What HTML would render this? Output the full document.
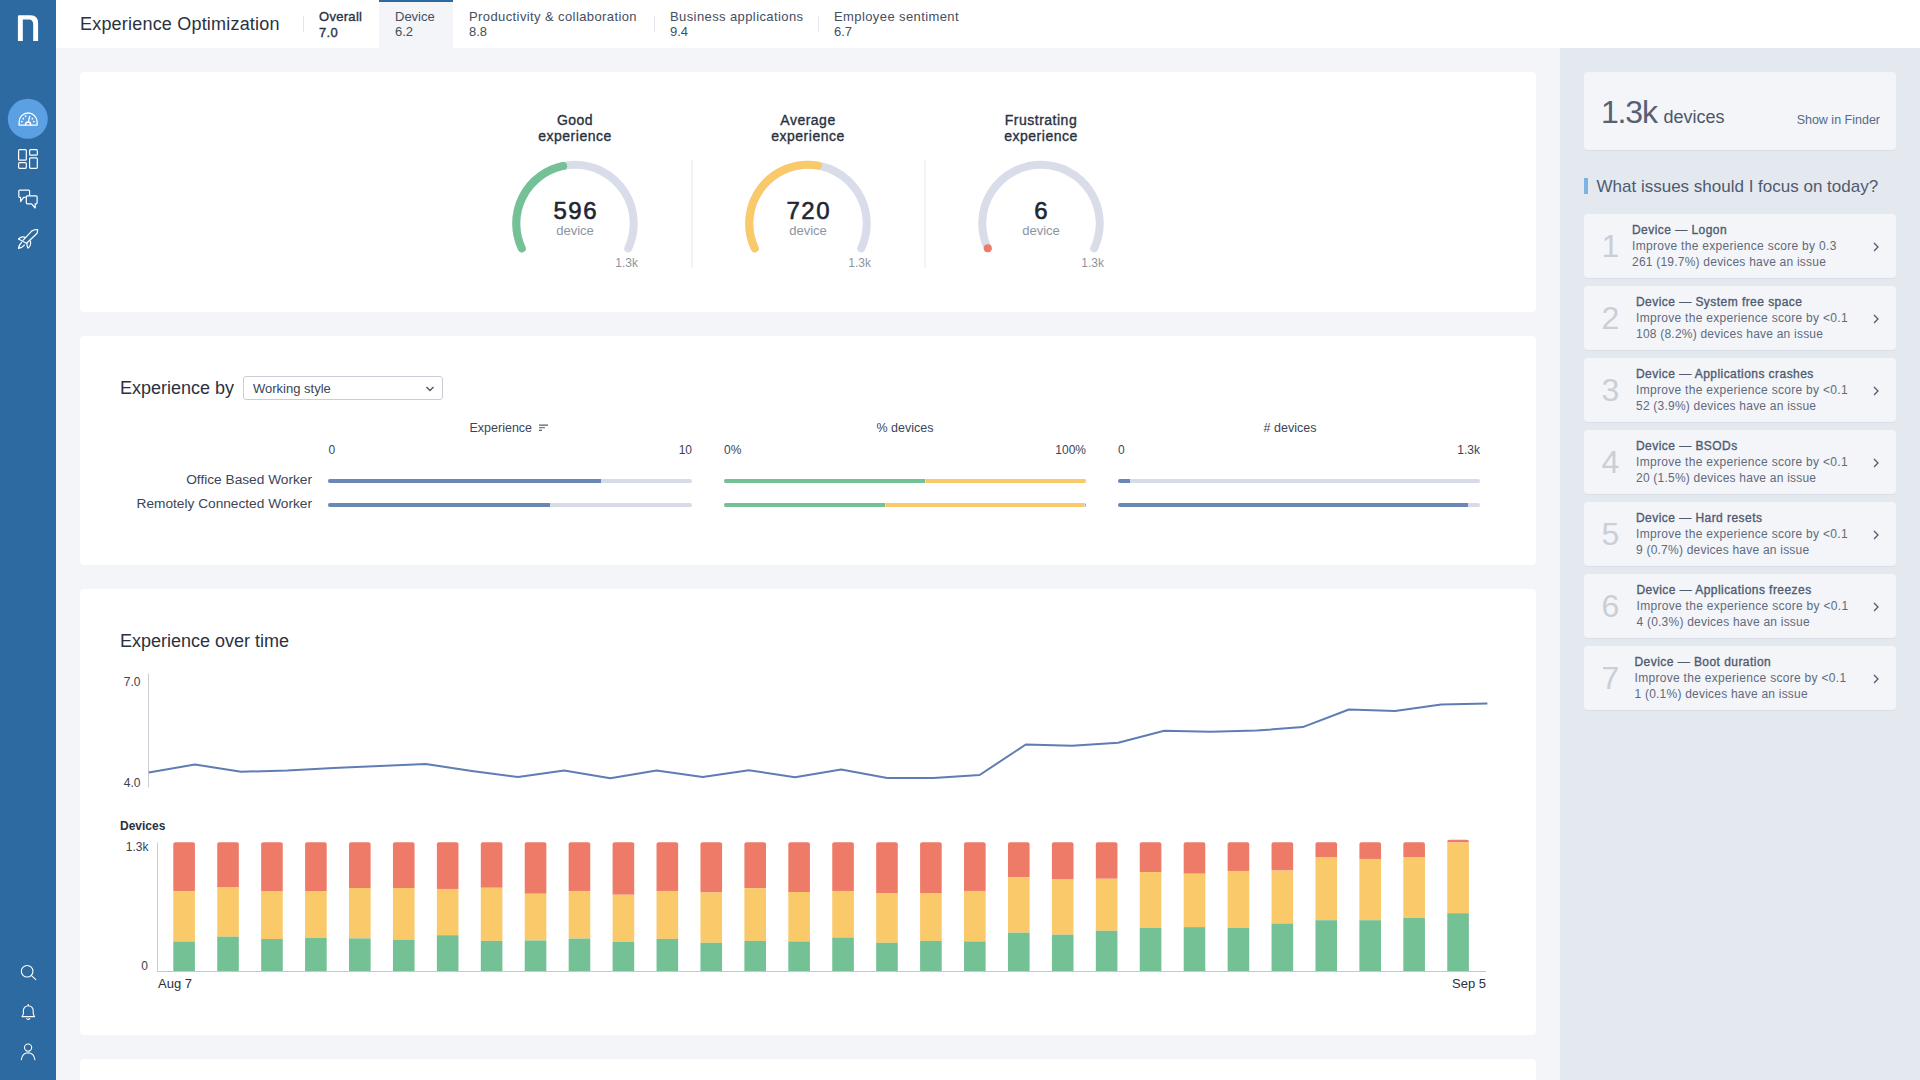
<!DOCTYPE html>
<html><head><meta charset="utf-8"><title>Experience Optimization</title>
<style>
*{margin:0;padding:0;box-sizing:border-box}
html,body{width:1920px;height:1080px;overflow:hidden;background:#F3F5F8;font-family:"Liberation Sans",sans-serif}
.t{position:absolute;white-space:nowrap}
.abs{position:absolute}
</style></head><body>
<div class="abs" style="left:0;top:0;width:56px;height:1080px;background:#2D6AA1"></div>
<div class="abs" style="left:56px;top:0;width:1864px;height:48px;background:#FFFFFF"></div>
<div class="abs" style="left:1560px;top:48px;width:360px;height:1032px;background:#E4E8EF"></div>
<div class="abs" style="left:80px;top:72px;width:1456px;height:240px;background:#FFFFFF;border-radius:4px"></div>
<div class="abs" style="left:80px;top:336px;width:1456px;height:229px;background:#FFFFFF;border-radius:4px"></div>
<div class="abs" style="left:80px;top:589px;width:1456px;height:446px;background:#FFFFFF;border-radius:4px"></div>
<div class="abs" style="left:80px;top:1059px;width:1456px;height:141px;background:#FFFFFF;border-radius:4px"></div>
<div class="t" style="left:80px;top:14.76px;font-size:18px;line-height:18px;color:#2A3140;font-weight:400;letter-spacing:0.2px;">Experience Optimization</div>
<div class="abs" style="left:303px;top:16px;width:1px;height:16px;background:#E3E6EC"></div>
<div class="abs" style="left:379px;top:0;width:74px;height:48px;background:#F3F5F8"></div>
<div class="abs" style="left:379px;top:0;width:74px;height:2px;background:#2D6AA1"></div>
<div class="t" style="left:319px;top:10.00px;font-size:13px;line-height:13px;color:#2A3140;font-weight:400;letter-spacing:0.3px;-webkit-text-stroke:0.35px #2A3140;">Overall</div>
<div class="t" style="left:319px;top:25.50px;font-size:13px;line-height:13px;color:#2A3140;font-weight:400;letter-spacing:0.3px;-webkit-text-stroke:0.35px #2A3140;">7.0</div>
<div class="t" style="left:395px;top:10.00px;font-size:13px;line-height:13px;color:#444E5F;font-weight:400;">Device</div>
<div class="t" style="left:395px;top:25.20px;font-size:13px;line-height:13px;color:#444E5F;font-weight:400;">6.2</div>
<div class="t" style="left:469px;top:10.00px;font-size:13px;line-height:13px;color:#444E5F;font-weight:400;letter-spacing:0.4px;">Productivity &amp; collaboration</div>
<div class="t" style="left:469px;top:25.20px;font-size:13px;line-height:13px;color:#444E5F;font-weight:400;">8.8</div>
<div class="t" style="left:670px;top:10.00px;font-size:13px;line-height:13px;color:#444E5F;font-weight:400;letter-spacing:0.4px;">Business applications</div>
<div class="t" style="left:670px;top:25.20px;font-size:13px;line-height:13px;color:#444E5F;font-weight:400;">9.4</div>
<div class="t" style="left:834px;top:10.00px;font-size:13px;line-height:13px;color:#444E5F;font-weight:400;letter-spacing:0.4px;">Employee sentiment</div>
<div class="t" style="left:834px;top:25.20px;font-size:13px;line-height:13px;color:#444E5F;font-weight:400;">6.7</div>
<div class="abs" style="left:654px;top:16px;width:1px;height:16px;background:#E3E6EC"></div>
<div class="abs" style="left:818px;top:16px;width:1px;height:16px;background:#E3E6EC"></div>
<svg class="abs" style="left:0;top:0" width="1920" height="1080" viewBox="0 0 1920 1080"><path d="M521.75,248.33 A58.75,58.75 0 1 1 628.25,248.33" fill="none" stroke="#D9DDEA" stroke-width="8" stroke-linecap="round"/><path d="M521.75,248.33 A58.75,58.75 0 0 1 563.17,165.95" fill="none" stroke="#74C196" stroke-width="8" stroke-linecap="round"/><path d="M754.75,248.33 A58.75,58.75 0 1 1 861.25,248.33" fill="none" stroke="#D9DDEA" stroke-width="8" stroke-linecap="round"/><path d="M754.75,248.33 A58.75,58.75 0 0 1 818.09,165.62" fill="none" stroke="#F9C96A" stroke-width="8" stroke-linecap="round"/><path d="M987.75,248.33 A58.75,58.75 0 1 1 1094.25,248.33" fill="none" stroke="#D9DDEA" stroke-width="8" stroke-linecap="round"/><circle cx="987.75" cy="248.33" r="4.0" fill="#EE7A68"/><rect x="691.5" y="160" width="1" height="108" fill="#E6E8EE"/><rect x="924.5" y="160" width="1" height="108" fill="#E6E8EE"/></svg>
<div class="t" style="left:75px;width:1000px;text-align:center;top:113.15px;font-size:14px;line-height:14px;color:#2A3140;font-weight:400;letter-spacing:0.5px;-webkit-text-stroke:0.35px #2A3140;">Good</div>
<div class="t" style="left:75px;width:1000px;text-align:center;top:129.15px;font-size:14px;line-height:14px;color:#2A3140;font-weight:400;letter-spacing:0.5px;-webkit-text-stroke:0.35px #2A3140;">experience</div>
<div class="t" style="left:75.79999999999995px;width:1000px;text-align:center;top:198.98px;font-size:24px;line-height:24px;color:#1F2633;font-weight:400;letter-spacing:1.6px;-webkit-text-stroke:0.6px #1F2633;">596</div>
<div class="t" style="left:75px;width:1000px;text-align:center;top:224.00px;font-size:13px;line-height:13px;color:#8C94A3;font-weight:400;">device</div>
<div class="t" style="right:1282px;top:256.84px;font-size:12px;line-height:12px;color:#8C94A3;font-weight:400;">1.3k</div>
<div class="t" style="left:308px;width:1000px;text-align:center;top:113.15px;font-size:14px;line-height:14px;color:#2A3140;font-weight:400;letter-spacing:0.5px;-webkit-text-stroke:0.35px #2A3140;">Average</div>
<div class="t" style="left:308px;width:1000px;text-align:center;top:129.15px;font-size:14px;line-height:14px;color:#2A3140;font-weight:400;letter-spacing:0.5px;-webkit-text-stroke:0.35px #2A3140;">experience</div>
<div class="t" style="left:308.79999999999995px;width:1000px;text-align:center;top:198.98px;font-size:24px;line-height:24px;color:#1F2633;font-weight:400;letter-spacing:1.6px;-webkit-text-stroke:0.6px #1F2633;">720</div>
<div class="t" style="left:308px;width:1000px;text-align:center;top:224.00px;font-size:13px;line-height:13px;color:#8C94A3;font-weight:400;">device</div>
<div class="t" style="right:1049px;top:256.84px;font-size:12px;line-height:12px;color:#8C94A3;font-weight:400;">1.3k</div>
<div class="t" style="left:541px;width:1000px;text-align:center;top:113.15px;font-size:14px;line-height:14px;color:#2A3140;font-weight:400;letter-spacing:0.5px;-webkit-text-stroke:0.35px #2A3140;">Frustrating</div>
<div class="t" style="left:541px;width:1000px;text-align:center;top:129.15px;font-size:14px;line-height:14px;color:#2A3140;font-weight:400;letter-spacing:0.5px;-webkit-text-stroke:0.35px #2A3140;">experience</div>
<div class="t" style="left:541.8px;width:1000px;text-align:center;top:198.98px;font-size:24px;line-height:24px;color:#1F2633;font-weight:400;letter-spacing:1.6px;-webkit-text-stroke:0.6px #1F2633;">6</div>
<div class="t" style="left:541px;width:1000px;text-align:center;top:224.00px;font-size:13px;line-height:13px;color:#8C94A3;font-weight:400;">device</div>
<div class="t" style="right:816px;top:256.84px;font-size:12px;line-height:12px;color:#8C94A3;font-weight:400;">1.3k</div>
<div class="t" style="left:120px;top:378.76px;font-size:18px;line-height:18px;color:#2A3140;font-weight:400;">Experience by</div>
<div class="abs" style="left:243px;top:376px;width:200px;height:24px;border:1px solid #C9CDD6;border-radius:3px;background:#fff"></div>
<div class="t" style="left:253px;top:382.00px;font-size:13px;line-height:13px;color:#3B4557;font-weight:400;">Working style</div>
<svg class="abs" style="left:425px;top:385px" width="10" height="8" viewBox="0 0 10 8"><path d="M1.5,2 L5,5.5 L8.5,2" fill="none" stroke="#4A5365" stroke-width="1.3"/></svg>
<div class="t" style="left:469.5px;top:422.42px;font-size:12.5px;line-height:12.5px;color:#3B4557;font-weight:400;">Experience</div>
<svg class="abs" style="left:538px;top:423.3px" width="12" height="10" viewBox="0 0 12 10"><rect x="1" y="1.6" width="9" height="1" fill="#2F3645"/><rect x="1" y="4.2" width="6" height="1" fill="#5A6070"/><rect x="1" y="6.7" width="3" height="1" fill="#2F3645"/></svg>
<div class="t" style="left:405px;width:1000px;text-align:center;top:422.42px;font-size:12.5px;line-height:12.5px;color:#3B4557;font-weight:400;">% devices</div>
<div class="t" style="left:790px;width:1000px;text-align:center;top:422.42px;font-size:12.5px;line-height:12.5px;color:#3B4557;font-weight:400;"># devices</div>
<div class="t" style="left:328.5px;top:443.84px;font-size:12px;line-height:12px;color:#3B4557;font-weight:400;">0</div>
<div class="t" style="right:1228px;top:443.84px;font-size:12px;line-height:12px;color:#3B4557;font-weight:400;">10</div>
<div class="t" style="left:724px;top:443.84px;font-size:12px;line-height:12px;color:#3B4557;font-weight:400;">0%</div>
<div class="t" style="right:834px;top:443.84px;font-size:12px;line-height:12px;color:#3B4557;font-weight:400;">100%</div>
<div class="t" style="left:1118px;top:443.84px;font-size:12px;line-height:12px;color:#3B4557;font-weight:400;">0</div>
<div class="t" style="right:440px;top:443.84px;font-size:12px;line-height:12px;color:#3B4557;font-weight:400;">1.3k</div>
<div class="t" style="right:1608px;top:473.40px;font-size:13.7px;line-height:13.7px;color:#3B4557;font-weight:400;">Office Based Worker</div>
<div class="t" style="right:1608px;top:497.40px;font-size:13.7px;line-height:13.7px;color:#3B4557;font-weight:400;">Remotely Connected Worker</div>
<div class="abs" style="left:328px;top:479px;width:364px;height:4px;border-radius:2px;background:#D7DBE7;overflow:hidden"><div class="abs" style="left:0px;top:0;width:273px;height:4px;background:#6A87B6"></div></div>
<div class="abs" style="left:328px;top:503px;width:364px;height:4px;border-radius:2px;background:#D7DBE7;overflow:hidden"><div class="abs" style="left:0px;top:0;width:222px;height:4px;background:#6A87B6"></div></div>
<div class="abs" style="left:724px;top:479px;width:362px;height:4px;border-radius:2px;background:#D7DBE7;overflow:hidden"><div class="abs" style="left:0px;top:0;width:201px;height:4px;background:#74C196"></div><div class="abs" style="left:202px;top:0;width:160px;height:4px;background:#F9C96A"></div></div>
<div class="abs" style="left:724px;top:503px;width:362px;height:4px;border-radius:2px;background:#D7DBE7;overflow:hidden"><div class="abs" style="left:0px;top:0;width:161px;height:4px;background:#74C196"></div><div class="abs" style="left:162px;top:0;width:198px;height:4px;background:#F9C96A"></div><div class="abs" style="left:360.5px;top:0;width:1.5px;height:4px;background:#EE7A68"></div></div>
<div class="abs" style="left:1118px;top:479px;width:362px;height:4px;border-radius:2px;background:#D7DBE7;overflow:hidden"><div class="abs" style="left:0px;top:0;width:12px;height:4px;background:#6A87B6"></div></div>
<div class="abs" style="left:1118px;top:503px;width:362px;height:4px;border-radius:2px;background:#D7DBE7;overflow:hidden"><div class="abs" style="left:0px;top:0;width:350px;height:4px;background:#6A87B6"></div></div>
<div class="t" style="left:120px;top:631.76px;font-size:18px;line-height:18px;color:#2A3140;font-weight:400;">Experience over time</div>
<svg class="abs" style="left:0;top:0" width="1920" height="1080" viewBox="0 0 1920 1080"><rect x="148" y="673.5" width="1" height="114" fill="#C9CDD6"/><polyline points="148.75,772.5 194.91,764.5 241.07,771.75 287.23,770.5 333.39,768 379.55,766 425.71,764 471.87,771 518.03,777 564.19,770.5 610.35,778.25 656.51,770.5 702.67,777 748.83,770.25 794.99,777.25 841.15,769.5 887.31,778 933.47,778 979.63,775 1025.79,744.5 1071.95,745.7 1118.11,742.7 1164.27,730.8 1210.43,731.7 1256.59,730.6 1302.75,727.1 1348.91,709.5 1395.07,710.9 1441.23,704.4 1487.39,703.5" fill="none" stroke="#5E7DB3" stroke-width="2" stroke-linejoin="round"/><rect x="157" y="842.5" width="1" height="129" fill="#C9CDD6"/><path d="M173.30,891.2 V844.2 Q173.30,842.2 175.30,842.2 H192.90 Q194.90,842.2 194.90,844.2 V891.2 Z" fill="#EE7A68"/><rect x="173.30" y="891.2" width="21.6" height="50.30" fill="#F9C96A"/><rect x="173.30" y="941.5" width="21.6" height="29.50" fill="#74C196"/><path d="M217.23,887.4 V844.2 Q217.23,842.2 219.23,842.2 H236.83 Q238.83,842.2 238.83,844.2 V887.4 Z" fill="#EE7A68"/><rect x="217.23" y="887.4" width="21.6" height="49.30" fill="#F9C96A"/><rect x="217.23" y="936.7" width="21.6" height="34.30" fill="#74C196"/><path d="M261.16,891 V844.2 Q261.16,842.2 263.16,842.2 H280.76 Q282.76,842.2 282.76,844.2 V891 Z" fill="#EE7A68"/><rect x="261.16" y="891" width="21.6" height="48.00" fill="#F9C96A"/><rect x="261.16" y="939" width="21.6" height="32.00" fill="#74C196"/><path d="M305.09,891.5 V844.2 Q305.09,842.2 307.09,842.2 H324.69 Q326.69,842.2 326.69,844.2 V891.5 Z" fill="#EE7A68"/><rect x="305.09" y="891.5" width="21.6" height="46.40" fill="#F9C96A"/><rect x="305.09" y="937.9" width="21.6" height="33.10" fill="#74C196"/><path d="M349.02,888 V844.2 Q349.02,842.2 351.02,842.2 H368.62 Q370.62,842.2 370.62,844.2 V888 Z" fill="#EE7A68"/><rect x="349.02" y="888" width="21.6" height="50.40" fill="#F9C96A"/><rect x="349.02" y="938.4" width="21.6" height="32.60" fill="#74C196"/><path d="M392.95,888 V844.2 Q392.95,842.2 394.95,842.2 H412.55 Q414.55,842.2 414.55,844.2 V888 Z" fill="#EE7A68"/><rect x="392.95" y="888" width="21.6" height="51.70" fill="#F9C96A"/><rect x="392.95" y="939.7" width="21.6" height="31.30" fill="#74C196"/><path d="M436.88,888.9 V844.2 Q436.88,842.2 438.88,842.2 H456.48 Q458.48,842.2 458.48,844.2 V888.9 Z" fill="#EE7A68"/><rect x="436.88" y="888.9" width="21.6" height="46.30" fill="#F9C96A"/><rect x="436.88" y="935.2" width="21.6" height="35.80" fill="#74C196"/><path d="M480.81,887.8 V844.2 Q480.81,842.2 482.81,842.2 H500.41 Q502.41,842.2 502.41,844.2 V887.8 Z" fill="#EE7A68"/><rect x="480.81" y="887.8" width="21.6" height="53.10" fill="#F9C96A"/><rect x="480.81" y="940.9" width="21.6" height="30.10" fill="#74C196"/><path d="M524.74,893.75 V844.2 Q524.74,842.2 526.74,842.2 H544.34 Q546.34,842.2 546.34,844.2 V893.75 Z" fill="#EE7A68"/><rect x="524.74" y="893.75" width="21.6" height="46.75" fill="#F9C96A"/><rect x="524.74" y="940.5" width="21.6" height="30.50" fill="#74C196"/><path d="M568.67,890.9 V844.2 Q568.67,842.2 570.67,842.2 H588.27 Q590.27,842.2 590.27,844.2 V890.9 Z" fill="#EE7A68"/><rect x="568.67" y="890.9" width="21.6" height="47.70" fill="#F9C96A"/><rect x="568.67" y="938.6" width="21.6" height="32.40" fill="#74C196"/><path d="M612.60,894.7 V844.2 Q612.60,842.2 614.60,842.2 H632.20 Q634.20,842.2 634.20,844.2 V894.7 Z" fill="#EE7A68"/><rect x="612.60" y="894.7" width="21.6" height="47.20" fill="#F9C96A"/><rect x="612.60" y="941.9" width="21.6" height="29.10" fill="#74C196"/><path d="M656.53,890.9 V844.2 Q656.53,842.2 658.53,842.2 H676.13 Q678.13,842.2 678.13,844.2 V890.9 Z" fill="#EE7A68"/><rect x="656.53" y="890.9" width="21.6" height="48.00" fill="#F9C96A"/><rect x="656.53" y="938.9" width="21.6" height="32.10" fill="#74C196"/><path d="M700.46,892.5 V844.2 Q700.46,842.2 702.46,842.2 H720.06 Q722.06,842.2 722.06,844.2 V892.5 Z" fill="#EE7A68"/><rect x="700.46" y="892.5" width="21.6" height="50.30" fill="#F9C96A"/><rect x="700.46" y="942.8" width="21.6" height="28.20" fill="#74C196"/><path d="M744.39,888.1 V844.2 Q744.39,842.2 746.39,842.2 H763.99 Q765.99,842.2 765.99,844.2 V888.1 Z" fill="#EE7A68"/><rect x="744.39" y="888.1" width="21.6" height="52.80" fill="#F9C96A"/><rect x="744.39" y="940.9" width="21.6" height="30.10" fill="#74C196"/><path d="M788.32,892 V844.2 Q788.32,842.2 790.32,842.2 H807.92 Q809.92,842.2 809.92,844.2 V892 Z" fill="#EE7A68"/><rect x="788.32" y="892" width="21.6" height="49.40" fill="#F9C96A"/><rect x="788.32" y="941.4" width="21.6" height="29.60" fill="#74C196"/><path d="M832.25,890.9 V844.2 Q832.25,842.2 834.25,842.2 H851.85 Q853.85,842.2 853.85,844.2 V890.9 Z" fill="#EE7A68"/><rect x="832.25" y="890.9" width="21.6" height="46.60" fill="#F9C96A"/><rect x="832.25" y="937.5" width="21.6" height="33.50" fill="#74C196"/><path d="M876.18,893 V844.2 Q876.18,842.2 878.18,842.2 H895.78 Q897.78,842.2 897.78,844.2 V893 Z" fill="#EE7A68"/><rect x="876.18" y="893" width="21.6" height="49.80" fill="#F9C96A"/><rect x="876.18" y="942.8" width="21.6" height="28.20" fill="#74C196"/><path d="M920.11,893 V844.2 Q920.11,842.2 922.11,842.2 H939.71 Q941.71,842.2 941.71,844.2 V893 Z" fill="#EE7A68"/><rect x="920.11" y="893" width="21.6" height="47.90" fill="#F9C96A"/><rect x="920.11" y="940.9" width="21.6" height="30.10" fill="#74C196"/><path d="M964.04,890.9 V844.2 Q964.04,842.2 966.04,842.2 H983.64 Q985.64,842.2 985.64,844.2 V890.9 Z" fill="#EE7A68"/><rect x="964.04" y="890.9" width="21.6" height="50.50" fill="#F9C96A"/><rect x="964.04" y="941.4" width="21.6" height="29.60" fill="#74C196"/><path d="M1007.97,877.2 V844.2 Q1007.97,842.2 1009.97,842.2 H1027.57 Q1029.57,842.2 1029.57,844.2 V877.2 Z" fill="#EE7A68"/><rect x="1007.97" y="877.2" width="21.6" height="55.50" fill="#F9C96A"/><rect x="1007.97" y="932.7" width="21.6" height="38.30" fill="#74C196"/><path d="M1051.90,879.4 V844.2 Q1051.90,842.2 1053.90,842.2 H1071.50 Q1073.50,842.2 1073.50,844.2 V879.4 Z" fill="#EE7A68"/><rect x="1051.90" y="879.4" width="21.6" height="55.30" fill="#F9C96A"/><rect x="1051.90" y="934.7" width="21.6" height="36.30" fill="#74C196"/><path d="M1095.83,878.8 V844.2 Q1095.83,842.2 1097.83,842.2 H1115.43 Q1117.43,842.2 1117.43,844.2 V878.8 Z" fill="#EE7A68"/><rect x="1095.83" y="878.8" width="21.6" height="52.00" fill="#F9C96A"/><rect x="1095.83" y="930.8" width="21.6" height="40.20" fill="#74C196"/><path d="M1139.76,872.1 V844.2 Q1139.76,842.2 1141.76,842.2 H1159.36 Q1161.36,842.2 1161.36,844.2 V872.1 Z" fill="#EE7A68"/><rect x="1139.76" y="872.1" width="21.6" height="55.90" fill="#F9C96A"/><rect x="1139.76" y="928" width="21.6" height="43.00" fill="#74C196"/><path d="M1183.69,873.7 V844.2 Q1183.69,842.2 1185.69,842.2 H1203.29 Q1205.29,842.2 1205.29,844.2 V873.7 Z" fill="#EE7A68"/><rect x="1183.69" y="873.7" width="21.6" height="53.40" fill="#F9C96A"/><rect x="1183.69" y="927.1" width="21.6" height="43.90" fill="#74C196"/><path d="M1227.62,870.9 V844.2 Q1227.62,842.2 1229.62,842.2 H1247.22 Q1249.22,842.2 1249.22,844.2 V870.9 Z" fill="#EE7A68"/><rect x="1227.62" y="870.9" width="21.6" height="57.10" fill="#F9C96A"/><rect x="1227.62" y="928" width="21.6" height="43.00" fill="#74C196"/><path d="M1271.55,870.6 V844.2 Q1271.55,842.2 1273.55,842.2 H1291.15 Q1293.15,842.2 1293.15,844.2 V870.6 Z" fill="#EE7A68"/><rect x="1271.55" y="870.6" width="21.6" height="52.90" fill="#F9C96A"/><rect x="1271.55" y="923.5" width="21.6" height="47.50" fill="#74C196"/><path d="M1315.48,857.6 V844.2 Q1315.48,842.2 1317.48,842.2 H1335.08 Q1337.08,842.2 1337.08,844.2 V857.6 Z" fill="#EE7A68"/><rect x="1315.48" y="857.6" width="21.6" height="62.60" fill="#F9C96A"/><rect x="1315.48" y="920.2" width="21.6" height="50.80" fill="#74C196"/><path d="M1359.41,858.9 V844.2 Q1359.41,842.2 1361.41,842.2 H1379.01 Q1381.01,842.2 1381.01,844.2 V858.9 Z" fill="#EE7A68"/><rect x="1359.41" y="858.9" width="21.6" height="61.30" fill="#F9C96A"/><rect x="1359.41" y="920.2" width="21.6" height="50.80" fill="#74C196"/><path d="M1403.34,857 V844.2 Q1403.34,842.2 1405.34,842.2 H1422.94 Q1424.94,842.2 1424.94,844.2 V857 Z" fill="#EE7A68"/><rect x="1403.34" y="857" width="21.6" height="61.00" fill="#F9C96A"/><rect x="1403.34" y="918" width="21.6" height="53.00" fill="#74C196"/><path d="M1447.27,842.5 V841.8 Q1447.27,839.8 1449.27,839.8 H1466.87 Q1468.87,839.8 1468.87,841.8 V842.5 Z" fill="#EE7A68"/><rect x="1447.27" y="842.5" width="21.6" height="70.70" fill="#F9C96A"/><rect x="1447.27" y="913.2" width="21.6" height="57.80" fill="#74C196"/><rect x="157" y="971" width="1329" height="1" fill="#C4C8D0"/></svg>
<div class="t" style="right:1779.5px;top:676.34px;font-size:12px;line-height:12px;color:#3B4150;font-weight:400;">7.0</div>
<div class="t" style="right:1779.5px;top:776.84px;font-size:12px;line-height:12px;color:#3B4150;font-weight:400;">4.0</div>
<div class="t" style="left:120px;top:819.84px;font-size:12px;line-height:12px;color:#2A3140;font-weight:700;">Devices</div>
<div class="t" style="right:1771.5px;top:840.84px;font-size:12px;line-height:12px;color:#3B4150;font-weight:400;">1.3k</div>
<div class="t" style="right:1772px;top:959.84px;font-size:12px;line-height:12px;color:#3B4150;font-weight:400;">0</div>
<div class="t" style="left:158px;top:977.00px;font-size:13px;line-height:13px;color:#2A3140;font-weight:400;">Aug 7</div>
<div class="t" style="right:434px;top:977.00px;font-size:13px;line-height:13px;color:#2A3140;font-weight:400;">Sep 5</div>
<div class="abs" style="left:1584px;top:72px;width:312px;height:78px;background:#F3F5F9;border-radius:4px;box-shadow:0 1px 0 #D9DDE5"></div>
<div class="t" style="left:1601px;top:96.21px;font-size:32px;line-height:32px;color:#566175;font-weight:400;letter-spacing:-1.2px;">1.3k</div>
<div class="t" style="left:1663.5px;top:108.06px;font-size:18px;line-height:18px;color:#4B566A;font-weight:400;">devices</div>
<div class="t" style="right:40px;top:113.72px;font-size:12.5px;line-height:12.5px;color:#586A86;font-weight:400;">Show in Finder</div>
<div class="abs" style="left:1584px;top:178px;width:4px;height:16px;background:#7DB4E2"></div>
<div class="t" style="left:1596.5px;top:178.11px;font-size:17px;line-height:17px;color:#4F5B6E;font-weight:400;">What issues should I focus on today?</div>
<div class="abs" style="left:1584px;top:214px;width:312px;height:64px;background:#F3F5F9;border-radius:4px;box-shadow:0 1px 0 #D9DDE5"></div>
<div class="t" style="left:1601.5px;top:229.91px;font-size:32px;line-height:32px;color:#C9CED7;font-weight:400;letter-spacing:-1px;">1</div>
<div class="t" style="left:1632px;top:224.04px;font-size:12px;line-height:12px;color:#505B70;font-weight:400;letter-spacing:0.45px;-webkit-text-stroke:0.35px #505B70;">Device — Logon</div>
<div class="t" style="left:1632px;top:240.04px;font-size:12px;line-height:12px;color:#5F6A7D;font-weight:400;letter-spacing:0.3px;">Improve the experience score by 0.3</div>
<div class="t" style="left:1632px;top:256.04px;font-size:12px;line-height:12px;color:#5F6A7D;font-weight:400;letter-spacing:0.22px;">261 (19.7%) devices have an issue</div>
<svg class="abs" style="left:1871px;top:242px" width="10" height="10" viewBox="0 0 10 10"><path d="M3,1 L7,5 L3,9" fill="none" stroke="#4F5B6E" stroke-width="1.3"/></svg>
<div class="abs" style="left:1584px;top:286px;width:312px;height:64px;background:#F3F5F9;border-radius:4px;box-shadow:0 1px 0 #D9DDE5"></div>
<div class="t" style="left:1601.5px;top:301.91px;font-size:32px;line-height:32px;color:#C9CED7;font-weight:400;letter-spacing:-1px;">2</div>
<div class="t" style="left:1636px;top:296.04px;font-size:12px;line-height:12px;color:#505B70;font-weight:400;letter-spacing:0.45px;-webkit-text-stroke:0.35px #505B70;">Device — System free space</div>
<div class="t" style="left:1636px;top:312.04px;font-size:12px;line-height:12px;color:#5F6A7D;font-weight:400;letter-spacing:0.3px;">Improve the experience score by &lt;0.1</div>
<div class="t" style="left:1636px;top:328.04px;font-size:12px;line-height:12px;color:#5F6A7D;font-weight:400;letter-spacing:0.22px;">108 (8.2%) devices have an issue</div>
<svg class="abs" style="left:1871px;top:314px" width="10" height="10" viewBox="0 0 10 10"><path d="M3,1 L7,5 L3,9" fill="none" stroke="#4F5B6E" stroke-width="1.3"/></svg>
<div class="abs" style="left:1584px;top:358px;width:312px;height:64px;background:#F3F5F9;border-radius:4px;box-shadow:0 1px 0 #D9DDE5"></div>
<div class="t" style="left:1601.5px;top:373.91px;font-size:32px;line-height:32px;color:#C9CED7;font-weight:400;letter-spacing:-1px;">3</div>
<div class="t" style="left:1636px;top:368.04px;font-size:12px;line-height:12px;color:#505B70;font-weight:400;letter-spacing:0.45px;-webkit-text-stroke:0.35px #505B70;">Device — Applications crashes</div>
<div class="t" style="left:1636px;top:384.04px;font-size:12px;line-height:12px;color:#5F6A7D;font-weight:400;letter-spacing:0.3px;">Improve the experience score by &lt;0.1</div>
<div class="t" style="left:1636px;top:400.04px;font-size:12px;line-height:12px;color:#5F6A7D;font-weight:400;letter-spacing:0.22px;">52 (3.9%) devices have an issue</div>
<svg class="abs" style="left:1871px;top:386px" width="10" height="10" viewBox="0 0 10 10"><path d="M3,1 L7,5 L3,9" fill="none" stroke="#4F5B6E" stroke-width="1.3"/></svg>
<div class="abs" style="left:1584px;top:430px;width:312px;height:64px;background:#F3F5F9;border-radius:4px;box-shadow:0 1px 0 #D9DDE5"></div>
<div class="t" style="left:1601.5px;top:445.91px;font-size:32px;line-height:32px;color:#C9CED7;font-weight:400;letter-spacing:-1px;">4</div>
<div class="t" style="left:1636px;top:440.04px;font-size:12px;line-height:12px;color:#505B70;font-weight:400;letter-spacing:0.45px;-webkit-text-stroke:0.35px #505B70;">Device — BSODs</div>
<div class="t" style="left:1636px;top:456.04px;font-size:12px;line-height:12px;color:#5F6A7D;font-weight:400;letter-spacing:0.3px;">Improve the experience score by &lt;0.1</div>
<div class="t" style="left:1636px;top:472.04px;font-size:12px;line-height:12px;color:#5F6A7D;font-weight:400;letter-spacing:0.22px;">20 (1.5%) devices have an issue</div>
<svg class="abs" style="left:1871px;top:458px" width="10" height="10" viewBox="0 0 10 10"><path d="M3,1 L7,5 L3,9" fill="none" stroke="#4F5B6E" stroke-width="1.3"/></svg>
<div class="abs" style="left:1584px;top:502px;width:312px;height:64px;background:#F3F5F9;border-radius:4px;box-shadow:0 1px 0 #D9DDE5"></div>
<div class="t" style="left:1601.5px;top:517.91px;font-size:32px;line-height:32px;color:#C9CED7;font-weight:400;letter-spacing:-1px;">5</div>
<div class="t" style="left:1636px;top:512.04px;font-size:12px;line-height:12px;color:#505B70;font-weight:400;letter-spacing:0.45px;-webkit-text-stroke:0.35px #505B70;">Device — Hard resets</div>
<div class="t" style="left:1636px;top:528.04px;font-size:12px;line-height:12px;color:#5F6A7D;font-weight:400;letter-spacing:0.3px;">Improve the experience score by &lt;0.1</div>
<div class="t" style="left:1636px;top:544.04px;font-size:12px;line-height:12px;color:#5F6A7D;font-weight:400;letter-spacing:0.22px;">9 (0.7%) devices have an issue</div>
<svg class="abs" style="left:1871px;top:530px" width="10" height="10" viewBox="0 0 10 10"><path d="M3,1 L7,5 L3,9" fill="none" stroke="#4F5B6E" stroke-width="1.3"/></svg>
<div class="abs" style="left:1584px;top:574px;width:312px;height:64px;background:#F3F5F9;border-radius:4px;box-shadow:0 1px 0 #D9DDE5"></div>
<div class="t" style="left:1601.5px;top:589.91px;font-size:32px;line-height:32px;color:#C9CED7;font-weight:400;letter-spacing:-1px;">6</div>
<div class="t" style="left:1636.5px;top:584.04px;font-size:12px;line-height:12px;color:#505B70;font-weight:400;letter-spacing:0.45px;-webkit-text-stroke:0.35px #505B70;">Device — Applications freezes</div>
<div class="t" style="left:1636.5px;top:600.04px;font-size:12px;line-height:12px;color:#5F6A7D;font-weight:400;letter-spacing:0.3px;">Improve the experience score by &lt;0.1</div>
<div class="t" style="left:1636.5px;top:616.04px;font-size:12px;line-height:12px;color:#5F6A7D;font-weight:400;letter-spacing:0.22px;">4 (0.3%) devices have an issue</div>
<svg class="abs" style="left:1871px;top:602px" width="10" height="10" viewBox="0 0 10 10"><path d="M3,1 L7,5 L3,9" fill="none" stroke="#4F5B6E" stroke-width="1.3"/></svg>
<div class="abs" style="left:1584px;top:646px;width:312px;height:64px;background:#F3F5F9;border-radius:4px;box-shadow:0 1px 0 #D9DDE5"></div>
<div class="t" style="left:1601.5px;top:661.91px;font-size:32px;line-height:32px;color:#C9CED7;font-weight:400;letter-spacing:-1px;">7</div>
<div class="t" style="left:1634.5px;top:656.04px;font-size:12px;line-height:12px;color:#505B70;font-weight:400;letter-spacing:0.45px;-webkit-text-stroke:0.35px #505B70;">Device — Boot duration</div>
<div class="t" style="left:1634.5px;top:672.04px;font-size:12px;line-height:12px;color:#5F6A7D;font-weight:400;letter-spacing:0.3px;">Improve the experience score by &lt;0.1</div>
<div class="t" style="left:1634.5px;top:688.04px;font-size:12px;line-height:12px;color:#5F6A7D;font-weight:400;letter-spacing:0.22px;">1 (0.1%) devices have an issue</div>
<svg class="abs" style="left:1871px;top:674px" width="10" height="10" viewBox="0 0 10 10"><path d="M3,1 L7,5 L3,9" fill="none" stroke="#4F5B6E" stroke-width="1.3"/></svg>
<svg class="abs" style="left:0;top:0" width="56" height="1080" viewBox="0 0 56 1080"><path d="M17.9,41 V16.5 Q17.9,15.3 19.1,15.3 H30.6 Q38.1,15.3 38.1,23.2 V41 H33.2 V24.6 Q33.2,19.4 28.9,19.4 H22.8 V41 Z" fill="#fff"/><circle cx="27.8" cy="118.8" r="20" fill="#5BA0E2"/><g fill="none" stroke="#fff" stroke-width="1.3" stroke-linecap="round" stroke-linejoin="round"><path d="M19.1,125.1 V122 A9,9 0 0 1 37.1,122 V125.1 Z"/><path d="M25.5,125.1 V124.6 A2.6,2.6 0 0 1 30.7,124.6 V125.1"/><path d="M28.3,122 L29.7,116.4"/></g><circle cx="25.6" cy="116.2" r="0.9" fill="#fff"/><circle cx="23.3" cy="118.7" r="0.9" fill="#fff"/><circle cx="21.9" cy="121.6" r="0.9" fill="#fff"/><circle cx="32.4" cy="118.7" r="0.9" fill="#fff"/><circle cx="33.8" cy="121.6" r="0.9" fill="#fff"/><g fill="none" stroke="#fff" stroke-width="1.2"><rect x="18.6" y="149.6" width="7.70" height="10.60" rx="1"/><rect x="18.6" y="162.6" width="7.70" height="5.70" rx="1"/><rect x="29.6" y="149.6" width="7.70" height="5.60" rx="1"/><rect x="29.6" y="157.8" width="7.70" height="10.50" rx="1"/></g><g fill="none" stroke="#fff" stroke-width="1.2" stroke-linejoin="round"><path d="M25.7,197.4 H23.6 L20.6,201.6 V197.4 H19.8 Q18.8,197.4 18.8,196.4 V191.1 Q18.8,190.1 19.8,190.1 H28.6 Q29.6,190.1 29.6,191.1 V195.2"/><path d="M27.3,195.9 H36.1 Q37.1,195.9 37.1,196.9 V202.8 Q37.1,203.8 36.1,203.8 H35.2 V208 L31.6,203.8 H27.3 Q26.3,203.8 26.3,202.8 V196.9 Q26.3,195.9 27.3,195.9 Z"/></g><g fill="none" stroke="#fff" stroke-width="1.2" stroke-linejoin="round" stroke-linecap="round"><path d="M23.2,240.2 L31.9,230.9 Q34.5,229.5 37.6,229.5 Q37.6,231.5 37.1,233.2 L26.6,243.3"/><path d="M18.6,238.9 L26.8,243.6"/><path d="M18.6,238.9 Q21.5,235.8 25.2,237.4"/><path d="M30.4,241 Q31.4,245.5 28,248.1 Q26.8,246 26.8,243.6"/><path d="M21.6,242.5 Q18.9,244.8 18.5,248.3 Q22.4,247.6 24.3,245.1"/></g><g fill="none" stroke="#fff" stroke-width="1.1" stroke-linecap="round"><circle cx="27.15" cy="971.25" r="5.8"/><path d="M31.5,975.6 L35.8,979.6"/></g><g fill="none" stroke="#fff" stroke-width="1.1" stroke-linejoin="round" stroke-linecap="round"><path d="M22,1016.6 Q23.4,1015.3 23.4,1013 V1010.6 A4.9,4.9 0 0 1 33.2,1010.6 V1013 Q33.2,1015.3 34.6,1016.6 Z"/><path d="M28.3,1005.7 V1004.5"/><path d="M26.8,1018.6 Q28.3,1020 29.8,1018.6"/></g><g fill="none" stroke="#fff" stroke-width="1.1" stroke-linecap="round"><circle cx="28.1" cy="1047.6" r="3.6"/><path d="M21.3,1059.7 Q22.2,1053 28.1,1052.8 Q34,1053 34.9,1059.7"/></g></svg>
</body></html>
